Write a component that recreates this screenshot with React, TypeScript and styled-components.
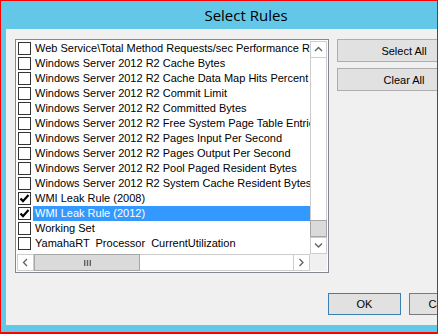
import React from "react";
import styled, { createGlobalStyle } from "styled-components";

const GlobalStyle = createGlobalStyle`
  html, body {
    margin: 0;
    padding: 0;
    background: #ffffff;
  }
  * {
    box-sizing: border-box;
  }
`;

const col = {
  frame: "#ff0000",
  caption: "#63c8e8",
  face: "#f0f0f0",
  listBorder: "#828790",
  highlight: "#3399ff",
  sbLine: "#cdcdcd",
  thumb: "#dadada",
  thumbBorder: "#a6a6a6",
  glyph: "#606060",
  btn: "#e1e1e1",
  btnBorder: "#adadad",
  btnDefault: "#3c7fb1",
};

const Frame = styled.div`
  width: 438px;
  height: 334px;
  border: 1px solid ${col.frame};
  border-bottom-width: 2px;
  background: ${col.caption};
  overflow: hidden;
  display: flex;
  flex-direction: column;
`;

const TitleBar = styled.div`
  height: 28px;
  flex-shrink: 0;
  display: flex;
  align-items: center;
  justify-content: center;
  padding-left: 54px;
  font-family: "Open Sans", "Liberation Sans", sans-serif;
  font-size: 15px;
  color: #000;
`;

const Client = styled.div`
  flex: 1;
  margin: 0 0 7px 5px;
  background: ${col.face};
  padding: 10px 0 0 9px;
  font-family: "Liberation Sans", Arial, sans-serif;
  font-size: 11px;
`;

const TopRow = styled.div`
  display: flex;
  align-items: flex-start;
  gap: 8px;
`;

const ListBox = styled.div`
  width: 314px;
  height: 234px;
  flex-shrink: 0;
  border: 1px solid ${col.listBorder};
  padding: 1px;
  background: #fff;
  display: grid;
  grid-template-columns: 293px 17px;
  grid-template-rows: 213px 17px;
`;

const Items = styled.div`
  overflow: hidden;
`;

const Row = styled.div`
  height: 15px;
  display: flex;
  align-items: center;
  padding-left: 1px;
`;

const Box = styled.span`
  width: 13px;
  height: 13px;
  flex-shrink: 0;
  border: 1px solid #333333;
  background: #fff;
  display: flex;
  align-items: center;
  justify-content: center;
`;

const Label = styled.span<{ $selected?: boolean }>`
  flex: 1;
  margin-left: 2px;
  padding-left: 2px;
  height: 15px;
  line-height: 15px;
  white-space: pre;
  overflow: hidden;
  color: ${(p) => (p.$selected ? "#fff" : "#000")};
  background: ${(p) => (p.$selected ? col.highlight : "transparent")};
`;

const VScroll = styled.div`
  display: flex;
  flex-direction: column;
  border-left: 1px solid ${col.sbLine};
  border-right: 1px solid ${col.sbLine};
`;

const HScroll = styled.div`
  display: flex;
  border-top: 1px solid ${col.sbLine};
  border-bottom: 1px solid ${col.sbLine};
`;

const Arrow = styled.div<{ $vertical?: boolean }>`
  flex: 0 0 17px;
  display: flex;
  align-items: center;
  justify-content: center;
  background: #fff;
  ${(p) =>
    p.$vertical
      ? `border-top: 1px solid ${col.sbLine}; border-bottom: 1px solid ${col.sbLine};`
      : `border-left: 1px solid ${col.sbLine}; border-right: 1px solid ${col.sbLine};`}
`;

const Track = styled.div`
  flex: 1;
  background: #fff;
`;

const VThumb = styled.div`
  flex: 0 0 17px;
  margin: 0 -1px;
  background: ${col.thumb};
  border: 1px solid ${col.thumbBorder};
`;

const HThumb = styled.div`
  flex: 0 0 106px;
  margin: -1px 0;
  background: ${col.thumb};
  border: 1px solid ${col.thumbBorder};
  display: flex;
  align-items: center;
  justify-content: center;
`;

const Corner = styled.div`
  background: ${col.face};
`;

const ButtonColumn = styled.div`
  display: flex;
  flex-direction: column;
  gap: 6px;
`;

const Button = styled.button<{ $width: number; $default?: boolean; $dark?: boolean }>`
  width: ${(p) => p.$width}px;
  height: 23px;
  flex-shrink: 0;
  padding: 0;
  background: ${col.btn};
  border: 1px solid
    ${(p) => (p.$default ? col.btnDefault : p.$dark ? "#7a7a7a" : col.btnBorder)};
  font-family: "Liberation Sans", Arial, sans-serif;
  font-size: 11px;
  color: #000;
`;

const BottomRow = styled.div`
  display: flex;
  gap: 8px;
  margin: 20px 0 0 313px;
  ${Button} {
    height: 22px;
  }
`;

type Dir = "up" | "down" | "left" | "right";

const Chevron = ({ dir }: { dir: Dir }) => {
  const pts = {
    up: "1,5 4.5,1.5 8,5",
    down: "1,1.5 4.5,5 8,1.5",
    left: "5,1 1.5,4.5 5,8",
    right: "1.5,1 5,4.5 1.5,8",
  }[dir];
  const vertical = dir === "up" || dir === "down";
  return (
    <svg width={vertical ? 9 : 7} height={vertical ? 7 : 9} viewBox={vertical ? "0 0 9 7" : "0 0 7 9"}>
      <polyline points={pts} fill="none" stroke={col.glyph} strokeWidth="1.3" />
    </svg>
  );
};

const Grip = () => (
  <svg width="7" height="6" viewBox="0 0 7 6">
    <rect x="0" y="0" width="1.4" height="6" fill={col.glyph} />
    <rect x="2.8" y="0" width="1.4" height="6" fill={col.glyph} />
    <rect x="5.6" y="0" width="1.4" height="6" fill={col.glyph} />
  </svg>
);

const Check = () => (
  <svg width="11" height="11" viewBox="0 0 11 11">
    <polyline points="1.5,5.5 4,8.2 9.5,2" fill="none" stroke="#000" strokeWidth="2.2" />
  </svg>
);

const rules = [
  { name: "Web Service\\Total Method Requests/sec Performance Rule" },
  { name: "Windows Server 2012 R2 Cache Bytes" },
  { name: "Windows Server 2012 R2 Cache Data Map Hits Percent" },
  { name: "Windows Server 2012 R2 Commit Limit" },
  { name: "Windows Server 2012 R2 Committed Bytes" },
  { name: "Windows Server 2012 R2 Free System Page Table Entries" },
  { name: "Windows Server 2012 R2 Pages Input Per Second" },
  { name: "Windows Server 2012 R2 Pages Output Per Second" },
  { name: "Windows Server 2012 R2 Pool Paged Resident Bytes" },
  { name: "Windows Server 2012 R2 System Cache Resident Bytes" },
  { name: "WMI Leak Rule (2008)", checked: true },
  { name: "WMI Leak Rule (2012)", checked: true, selected: true },
  { name: "Working Set" },
  { name: "YamahaRT  Processor  CurrentUtilization" },
];

const App: React.FC = () => {
  return (
    <>
      <GlobalStyle />
      <Frame>
        <TitleBar>Select Rules</TitleBar>
        <Client>
          <TopRow>
            <ListBox>
              <Items>
                {rules.map((r) => (
                  <Row key={r.name}>
                    <Box>{r.checked && <Check />}</Box>
                    <Label $selected={r.selected}>{r.name}</Label>
                  </Row>
                ))}
              </Items>
              <VScroll>
                <Arrow $vertical>
                  <Chevron dir="up" />
                </Arrow>
                <Track />
                <VThumb />
                <Arrow $vertical>
                  <Chevron dir="down" />
                </Arrow>
              </VScroll>
              <HScroll>
                <Arrow>
                  <Chevron dir="left" />
                </Arrow>
                <HThumb>
                  <Grip />
                </HThumb>
                <Track />
                <Arrow>
                  <Chevron dir="right" />
                </Arrow>
              </HScroll>
              <Corner />
            </ListBox>
            <ButtonColumn>
              <Button $width={134}>Select All</Button>
              <Button $width={134}>Clear All</Button>
            </ButtonColumn>
          </TopRow>
          <BottomRow>
            <Button $width={73} $default>
              OK
            </Button>
            <Button $width={73} $dark>
              Cancel
            </Button>
          </BottomRow>
        </Client>
      </Frame>
    </>
  );
};

export default App;
